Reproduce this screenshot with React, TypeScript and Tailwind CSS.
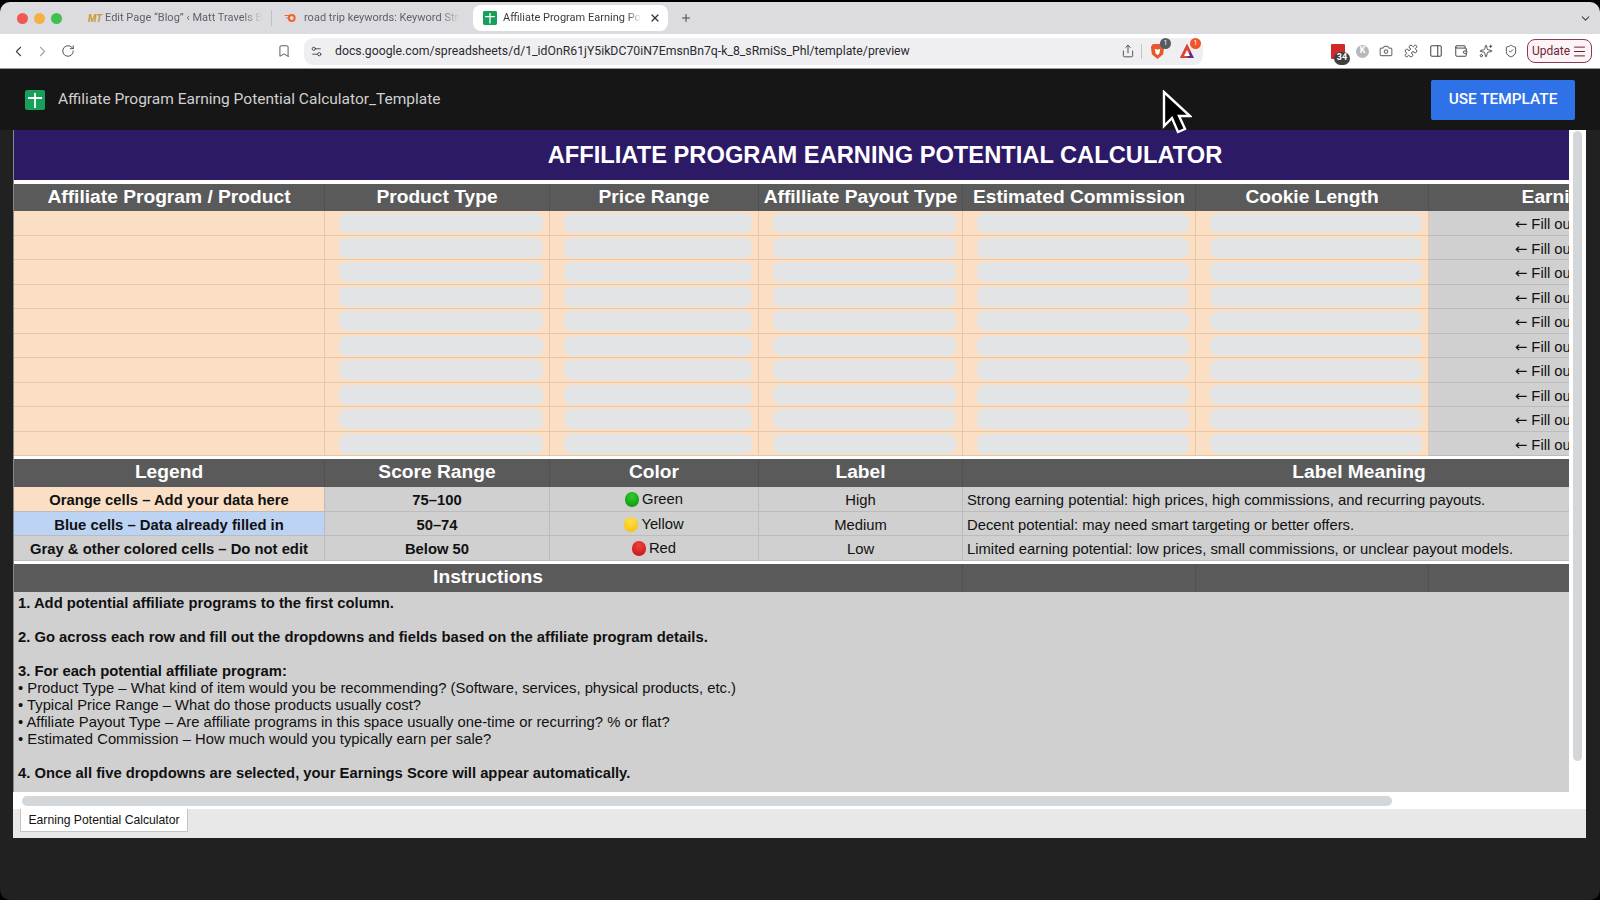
import React from 'react';
import {
  Bookmark,
  Camera,
  ChevronDown,
  ChevronLeft,
  ChevronRight,
  Menu,
  PanelRight,
  Plus,
  Puzzle,
  RotateCw,
  Settings2,
  Share,
  ShieldCheck,
  Sparkles,
  Wallet,
  X,
} from 'lucide-react';

const SheetsIcon = ({ className }: { className: string }) => (
  <svg viewBox="0 0 20 20" className={className}>
    <rect width="20" height="20" rx="2" fill="#16a05a" />
    <path d="M10 3v15M3 8h14" stroke="#fff" strokeWidth="1.8" />
  </svg>
);

const BraveIcon = () => (
  <svg viewBox="0 0 16 18" className="h-[17px] w-[15px]">
    <path d="M3 1h10l2 3-1 8-6 5-6-5-1-8z" fill="#e8562a" />
    <path d="M5 6l3 1 3-1-1 5-2 2-2-2z" fill="#fff" />
  </svg>
);

const AuroraIcon = () => (
  <svg viewBox="0 0 16 16" className="h-4 w-4">
    <path d="M8 1l7 14H1z" fill="#5c2d91" />
    <path d="M8 1l3.5 7-3.5 7H1z" fill="#e8402a" />
    <path d="M8 7l3 6H5z" fill="#fff" />
  </svg>
);

const Badge = ({ children, className }: { children: React.ReactNode; className: string }) => (
  <span className={`absolute flex items-center justify-center rounded-full text-white ${className}`}>{children}</span>
);

const BrowserChrome = () => (
  <>
    <div className="flex h-[32px] shrink-0 items-center bg-[#dcdce0] font-['Roboto',sans-serif] text-[11px] text-[#5f5f66]">
      <div className="ml-[17px] flex gap-[6px]">
        <span className="h-[11px] w-[11px] rounded-full bg-[#ee5a52]" />
        <span className="h-[11px] w-[11px] rounded-full bg-[#f5b041]" />
        <span className="h-[11px] w-[11px] rounded-full bg-[#3fc04f]" />
      </div>
      <span className="ml-[26px] w-[11px] text-[10px] font-bold italic text-[#c99a3c]">MT</span>
      <span className="ml-[6px] w-[157px] overflow-hidden whitespace-nowrap [mask-image:linear-gradient(to_right,black_88%,transparent)]">
        Edit Page “Blog” ‹ Matt Travels Blog
      </span>
      <span className="ml-[9px] h-[16px] w-px bg-[#bfbfc4]" />
      <svg viewBox="0 0 14 12" className="ml-[12px] h-[10px] w-[13px]">
        <circle cx="8.5" cy="6" r="3.5" fill="none" stroke="#f4622a" strokeWidth="2.4" />
        <path d="M0 3h6M2 6h4" stroke="#f4622a" strokeWidth="1.4" />
      </svg>
      <span className="ml-[7px] w-[156px] overflow-hidden whitespace-nowrap [mask-image:linear-gradient(to_right,black_88%,transparent)]">
        road trip keywords: Keyword Strategy
      </span>
      <div className="ml-[13px] flex h-[26px] w-[195px] items-center rounded-[8px] bg-white pl-[10px] pr-[7px] text-[#3c3c40]">
        <SheetsIcon className="h-[14px] w-[14px] shrink-0" />
        <span className="ml-[6px] w-[138px] overflow-hidden whitespace-nowrap [mask-image:linear-gradient(to_right,black_90%,transparent)]">
          Affiliate Program Earning Potential
        </span>
        <X className="ml-[8px] h-[12px] w-[12px] text-[#333]" strokeWidth={2.4} />
      </div>
      <Plus className="ml-[12px] h-[12px] w-[12px] text-[#444]" strokeWidth={2} />
      <ChevronDown className="ml-auto mr-[8px] h-[13px] w-[13px] text-[#444]" />
    </div>

    <div className="flex h-[35px] shrink-0 items-center border-b border-[#9b9b9b] bg-white text-[#48484c]">
      <ChevronLeft className="ml-[10px] h-[17px] w-[17px]" strokeWidth={1.5} />
      <ChevronRight className="ml-[7px] h-[17px] w-[17px] text-[#a4a4a8]" strokeWidth={1.5} />
      <RotateCw className="ml-[10px] h-[14px] w-[14px]" strokeWidth={1.6} />
      <Bookmark className="ml-[202px] h-[14px] w-[14px]" strokeWidth={1.5} />
      <div className="ml-[13px] flex h-[27px] w-[899px] items-center rounded-[9px] bg-[#efeff2] pl-[6px] pr-[8px]">
        <Settings2 className="h-[13px] w-[13px]" strokeWidth={1.7} />
        <span className="ml-[12px] font-['Roboto',sans-serif] text-[12.25px] text-[#2b2b2e]">
          docs.google.com/spreadsheets/d/1_idOnR61jY5ikDC70iN7EmsnBn7q-k_8_sRmiSs_Phl/template/preview
        </span>
        <Share className="ml-auto h-[14px] w-[14px]" strokeWidth={1.6} />
        <span className="ml-[6px] h-[15px] w-px bg-[#c4c4c8]" />
        <span className="relative ml-[8px] flex">
          <BraveIcon />
          <Badge className="-right-[6px] -top-[5px] h-[11px] w-[11px] bg-[#555a63] text-[7px]">1</Badge>
        </span>
        <span className="relative ml-[14px] flex">
          <AuroraIcon />
          <Badge className="-right-[6px] -top-[5px] h-[11px] w-[11px] bg-[#f0562a] text-[7px]">1</Badge>
        </span>
      </div>
      <span className="relative ml-[128px] h-[15px] w-[14px] rounded-[1px] bg-[#cf2a2a]">
        <Badge className="-bottom-[6px] left-[3px] h-[13px] w-[16px] rounded-[3px] bg-[#3f3f42] font-['Roboto',sans-serif] text-[9px] font-bold">34</Badge>
      </span>
      <span className="ml-[11px] flex h-[13px] w-[13px] items-center justify-center rounded-full bg-[#b8b8bc] font-['Roboto',sans-serif] text-[9px] font-bold text-white">K</span>
      <Camera className="ml-[10px] h-[14px] w-[14px] text-[#77777b]" strokeWidth={2} />
      <Puzzle className="ml-[11px] h-[14px] w-[14px]" strokeWidth={1.6} />
      <PanelRight className="ml-[11px] h-[14px] w-[14px]" strokeWidth={1.8} />
      <Wallet className="ml-[11px] h-[14px] w-[14px]" strokeWidth={1.7} />
      <Sparkles className="ml-[11px] h-[14px] w-[14px]" strokeWidth={1.6} />
      <ShieldCheck className="ml-[11px] h-[14px] w-[14px]" strokeWidth={1.6} />
      <div className="ml-[9px] flex h-[24px] w-[65px] items-center justify-center gap-[2px] rounded-[8px] border border-[#8a3a50] bg-[#fbf3f5] font-['Roboto',sans-serif] text-[12px] text-[#6f1f38]">
        Update
        <Menu className="h-[15px] w-[15px]" strokeWidth={1.6} />
      </div>
    </div>
  </>
);

const columns = 'grid-cols-[311px_225px_209px_204px_233px_233px_327px]';
const pillColumns = ['type', 'price', 'payout', 'commission', 'cookie'];
const headers = [
  'Affiliate Program / Product',
  'Product Type',
  'Price Range',
  'Affilliate Payout Type',
  'Estimated Commission',
  'Cookie Length',
  'Earnings Score',
];
const rows = Array.from({ length: 10 }, (_, i) => i);

const legend = [
  { name: 'Orange cells – Add your data here', bg: 'bg-[#fbdfc5]', height: 'h-[25px]', range: '75–100', dot: 'bg-[radial-gradient(circle_at_50%_30%,#2ecb2e,#0a8f0a)]', color: 'Green', label: 'High', meaning: 'Strong earning potential: high prices, high commissions, and recurring payouts.' },
  { name: 'Blue cells – Data already filled in', bg: 'bg-[#bdd3f3]', height: 'h-[24px]', range: '50–74', dot: 'bg-[radial-gradient(circle_at_50%_30%,#ffe14d,#f5bb00)]', color: 'Yellow', label: 'Medium', meaning: 'Decent potential: may need smart targeting or better offers.' },
  { name: 'Gray & other colored cells – Do not edit', bg: 'bg-[#d0d0d0]', height: 'h-[25px]', range: 'Below 50', dot: 'bg-[radial-gradient(circle_at_50%_30%,#f04040,#c01010)]', color: 'Red', label: 'Low', meaning: 'Limited earning potential: low prices, small commissions, or unclear payout models.' },
];

const headCell = 'flex items-center justify-center whitespace-nowrap border-r border-[#505050] pb-[2px] text-[19.2px] leading-[20px] font-bold text-white';
const topHeadCell = 'flex items-center justify-center whitespace-nowrap border-r border-[#505050] pb-[1px] text-[19.2px] leading-[20px] font-bold text-white';
const grayCell = 'flex items-center justify-center border-b border-r border-[#bcbcbc] bg-[#d0d0d0] pt-[3px]';

const Sheet = () => (
  <div className="ml-[13px] mr-[14px] flex h-[708px] shrink-0 flex-col bg-white font-['Liberation_Sans',Arial,sans-serif]">
    <div className="flex h-[662px] shrink-0 border-l border-[#888]">
      <div className="w-[1555px] shrink-0 overflow-hidden">
        <div className="w-[1742px]">
          <div className="flex h-[50px] items-center justify-center bg-[#2c1a66] pt-[2px] text-[23.7px] font-bold text-white">
            AFFILIATE PROGRAM EARNING POTENTIAL CALCULATOR
          </div>
          <div className="h-[4px] bg-white" />
          <div className={`grid h-[27px] bg-[#5a5a5a] ${columns}`}>
            {headers.map(h => (
              <div key={h} className={topHeadCell}>{h}</div>
            ))}
          </div>
          {rows.map(i => (
            <div key={i} className={`grid ${columns} ${i % 2 === 0 ? 'h-[25px]' : 'h-[24px]'}`}>
              <div className="border-b border-r border-[#e8c6a6] bg-[#fbdfc5]" />
              {pillColumns.map(key => (
                <div key={key} className="flex items-center border-b border-r border-[#e8c6a6] bg-[#fbdfc5]">
                  <div className="ml-[14px] mr-[6px] h-[20px] flex-1 rounded-[8px] bg-[#e2e4e6]" />
                </div>
              ))}
              <div className="flex items-center justify-center whitespace-nowrap border-b border-[#bcbcbc] bg-[#d0d0d0] pt-[3px] text-[14.8px] leading-[17px] text-[#111]">
                <span className="font-['DejaVu_Sans',sans-serif] text-[15px]">←</span>&nbsp;Fill out all dropdowns
              </div>
            </div>
          ))}
          <div className="h-[3px] bg-white" />
          <div className={`grid h-[28px] bg-[#5a5a5a] ${columns}`}>
            <div className={headCell}>Legend</div>
            <div className={headCell}>Score Range</div>
            <div className={headCell}>Color</div>
            <div className={headCell}>Label</div>
            <div className={`${headCell} col-span-3`}>Label Meaning</div>
          </div>
          {legend.map(l => (
            <div key={l.name} className={`grid text-[14.8px] leading-[17px] text-[#111] ${l.height} ${columns}`}>
              <div className={`flex items-center justify-center whitespace-nowrap border-b border-r border-[#bcbcbc] pt-[3px] font-bold ${l.bg}`}>{l.name}</div>
              <div className={`${grayCell} font-bold`}>{l.range}</div>
              <div className="flex items-center justify-center gap-[3px] border-b border-r border-[#bcbcbc] bg-[#d0d0d0] pt-[1px]">
                <span className={`h-[15px] w-[14px] rounded-full ${l.dot}`} />
                {l.color}
              </div>
              <div className={grayCell}>{l.label}</div>
              <div className="col-span-3 flex items-center border-b border-[#bcbcbc] bg-[#d0d0d0] pl-[4px] pt-[3px]">{l.meaning}</div>
            </div>
          ))}
          <div className="h-[3px] bg-white" />
          <div className={`grid h-[28px] bg-[#5a5a5a] ${columns}`}>
            <div className={`${headCell} col-span-4`}>Instructions</div>
            <div className={headCell} />
            <div className={headCell} />
            <div className={headCell} />
          </div>
          <div className="h-[200px] bg-[#d0d0d0] pl-[4px] pt-[3px] text-[14.8px] leading-[17px] text-[#111]">
            <p className="font-bold">1. Add potential affiliate programs to the first column.</p>
            <p className="mt-[17px] font-bold">2. Go across each row and fill out the dropdowns and fields based on the affiliate program details.</p>
            <p className="mt-[17px] font-bold">3. For each potential affiliate program:</p>
            <p>• Product Type – What kind of item would you be recommending? (Software, services, physical products, etc.)</p>
            <p>• Typical Price Range – What do those products usually cost?</p>
            <p>• Affiliate Payout Type – Are affiliate programs in this space usually one-time or recurring? % or flat?</p>
            <p>• Estimated Commission – How much would you typically earn per sale?</p>
            <p className="mt-[17px] font-bold">4. Once all five dropdowns are selected, your Earnings Score will appear automatically.</p>
          </div>
        </div>
      </div>
      <div className="flex flex-1 justify-center bg-white pt-[1px]">
        <div className="h-[630px] w-[9px] rounded-full bg-[#d3d7da]" />
      </div>
    </div>
    <div className="flex h-[17px] shrink-0 items-center bg-white pl-[9px]">
      <div className="h-[10px] w-[1370px] rounded-full bg-[#d3d7da]" />
    </div>
    <div className="flex h-[29px] shrink-0 items-start bg-[#e8e8e8] pl-[7px]">
      <div className="flex h-[23px] w-[168px] items-center justify-center border-x border-b border-[#c4c4c4] bg-white pt-[1px] text-[12.2px] text-[#111]">
        Earning Potential Calculator
      </div>
    </div>
  </div>
);

export default function App() {
  return (
    <div className="relative h-[900px] w-[1600px] overflow-hidden bg-black pt-[2px]">
      <div className="flex h-[898px] flex-col overflow-hidden rounded-[10px] bg-[#212121]">
        <BrowserChrome />
        <div className="flex h-[61px] shrink-0 items-center bg-[#161616] pt-[1px] font-['Roboto',sans-serif]">
          <SheetsIcon className="ml-[25px] h-[20px] w-[20px]" />
          <span className="ml-[13px] text-[15.5px] text-[#d0d0d0]">Affiliate Program Earning Potential Calculator_Template</span>
          <button className="ml-auto mr-[25px] h-[40px] w-[144px] rounded-[2px] bg-[#2f72e8] text-[15.4px] font-medium text-white">USE TEMPLATE</button>
        </div>
        <Sheet />
      </div>
      <svg viewBox="0 0 30 46" className="absolute left-[1162px] top-[90px] h-[46px] w-[30px]">
        <path d="M2 2v34l8-8 6 14 7-3-6-13h11z" fill="#000" stroke="#fff" strokeWidth="2.4" strokeLinejoin="miter" />
      </svg>
    </div>
  );
}
